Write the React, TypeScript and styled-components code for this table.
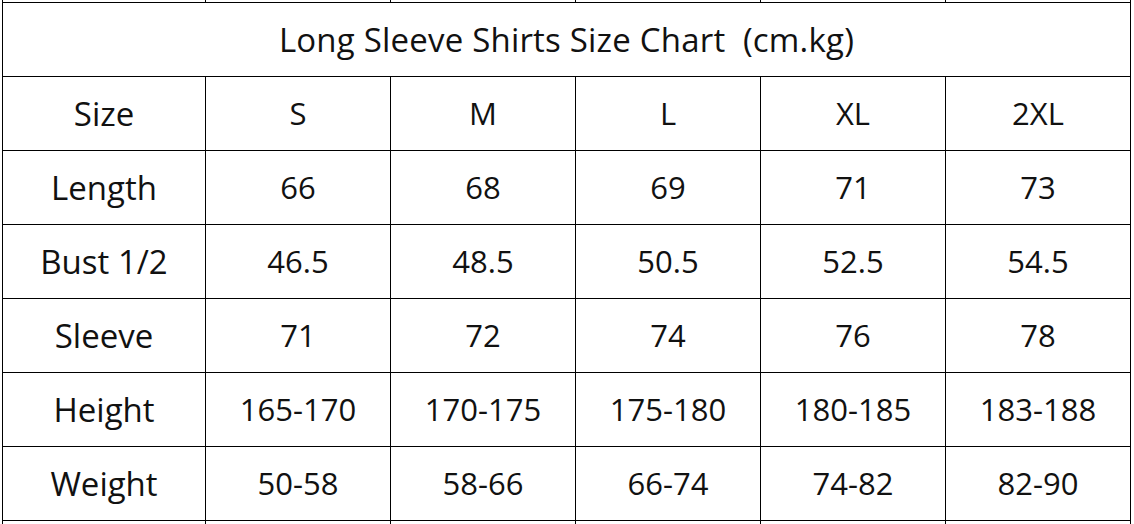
import styled, { createGlobalStyle } from "styled-components";

const GlobalStyle = createGlobalStyle`
  html, body {
    margin: 0;
    padding: 0;
    background: #ffffff;
  }
  body {
    font-family: "Open Sans", "Noto Sans", "DejaVu Sans", sans-serif;
    color: #111111;
  }
`;

const Page = styled.div`
  width: 1134px;
  height: 524px;
  overflow: hidden;
  background: #ffffff;
`;

const Grid = styled.div`
  display: grid;
  grid-template-columns: 203px repeat(5, 185px);
  margin-left: 2px;
  width: 1128px;
  border-right: 1px solid #000;
`;

const Stub = styled.div<{ $h: number }>`
  height: ${(p) => p.$h}px;
  border-left: 1px solid #000;
`;

const Cell = styled.div<{ $label?: boolean }>`
  box-sizing: border-box;
  height: 74px;
  border-left: 1px solid #000;
  border-top: 1px solid #000;
  display: flex;
  align-items: center;
  justify-content: center;
  font-size: ${(p) => (p.$label ? 33 : 31)}px;
  line-height: 1;
`;

const Title = styled(Cell)`
  grid-column: 1 / -1;
  font-size: 33px;
  letter-spacing: 0.2px;
  white-space: pre;
`;

const BottomStub = styled(Stub)`
  border-top: 1px solid #000;
`;

const sizes = ["S", "M", "L", "XL", "2XL"];

const rows: [string, string[]][] = [
  ["Length", ["66", "68", "69", "71", "73"]],
  ["Bust 1/2", ["46.5", "48.5", "50.5", "52.5", "54.5"]],
  ["Sleeve", ["71", "72", "74", "76", "78"]],
  ["Height", ["165-170", "170-175", "175-180", "180-185", "183-188"]],
  ["Weight", ["50-58", "58-66", "66-74", "74-82", "82-90"]],
];

const App = () => {
  return (
    <Page>
      <GlobalStyle />
      <Grid>
        {Array.from({ length: 6 }).map((_, i) => (
          <Stub key={"t" + i} $h={2} />
        ))}
        <Title>Long Sleeve Shirts Size Chart  (cm.kg)</Title>
        <Cell $label>Size</Cell>
        {sizes.map((s) => (
          <Cell key={s}>{s}</Cell>
        ))}
        {rows.map(([label, vals]) => [
          <Cell key={label} $label>
            {label}
          </Cell>,
          ...vals.map((v, i) => <Cell key={label + i}>{v}</Cell>),
        ])}
        {Array.from({ length: 6 }).map((_, i) => (
          <BottomStub key={"b" + i} $h={4} />
        ))}
      </Grid>
    </Page>
  );
};

export default App;
